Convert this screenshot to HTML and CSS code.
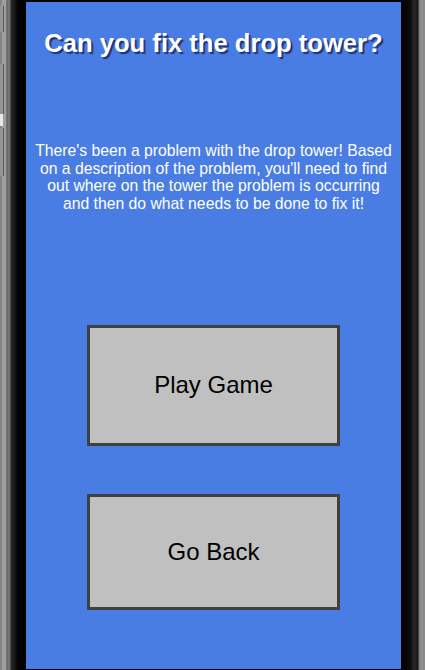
FILE: index.html
```html
<!DOCTYPE html>
<html>
<head>
<meta charset="utf-8">
<title>Can you fix the drop tower?</title>
<link rel="stylesheet" href="styles.css">
</head>
<body>
<div class="device">
  <div class="bezel bezel-left">
    <span class="side-btn btn-a"></span>
    <span class="side-btn btn-b"></span>
    <span class="side-btn btn-c"></span>
  </div>
  <main class="screen">
    <h1 class="title">Can you fix the drop tower?</h1>
    <p class="intro">There's been a problem with the drop tower! Based on a description of the problem, you'll need to find out where on the tower the problem is occurring and then do what needs to be done to fix it!</p>
    <div class="actions">
      <button class="action play">Play Game</button>
      <button class="action back">Go Back</button>
    </div>
  </main>
  <div class="bezel bezel-right"></div>
</div>
</body>
</html>
```
FILE: styles.css
```css
html, body {
  margin: 0;
  padding: 0;
  background: #000;
}
.device {
  display: flex;
  width: 425px;
  height: 670px;
  overflow: hidden;
  font-family: "Liberation Sans", Arial, sans-serif;
}
.bezel {
  flex: none;
  height: 670px;
}
.bezel-left {
  width: 26px;
  position: relative;
  background: linear-gradient(to right,
    #7e7e7e 0, #8e8e8e 2px, #a2a2a2 3px, #9a9a9a 6px,
    #555 7px, #7a7a7a 8px, #6c6c6c 10px,
    #2a2a2a 11px, #1b1b1b 14px, #0c0c0c 16px, #040404 18px, #000 26px);
}
.side-btn {
  position: absolute;
  left: 0;
  width: 3px;
  border-right: 1px solid #5a5a5a;
  background: #959595;
}
.btn-a { top: 6px; height: 26px; }
.btn-b { top: 64px; height: 50px; }
.btn-c { top: 128px; height: 48px; }
.btn-b::after {
  content: "";
  display: block;
  margin-top: 50px;
  height: 12px;
  width: 3px;
  background: #e8e8e8;
}
.bezel-right {
  width: 24px;
  background: linear-gradient(to right,
    #000 0, #050505 6px, #0e0e0e 10px, #1e1e1e 11px, #262626 15px,
    #141414 16px, #1a1a1a 17px, #7a7a7a 18px, #909090 20px, #8a8a8a 24px);
}
.screen {
  flex: none;
  width: 375px;
  height: 667px;
  margin-top: 2px;
  background: #4a7de3;
  display: flex;
  flex-direction: column;
  align-items: center;
}
.title {
  margin: 26px 0 0;
  font-size: 25.6px;
  line-height: 30px;
  font-weight: bold;
  color: #fff;
  text-align: center;
  text-shadow: 2px 2px 1px #1d347a;
}
.intro {
  margin: 84px 0 0;
  padding: 0 7px;
  font-size: 15.75px;
  line-height: 17.7px;
  color: #fff;
  text-align: center;
}
.actions {
  margin-top: 112px;
  display: flex;
  flex-direction: column;
  align-items: center;
  gap: 48px;
}
.action {
  box-sizing: border-box;
  width: 253px;
  border: 3px solid #404040;
  background: #c0c0c0;
  color: #000;
  font-family: "Liberation Sans", Arial, sans-serif;
  font-size: 24px;
  padding: 0;
  margin: 0;
}
.play { height: 121px; }
.back { height: 116px; }
```
